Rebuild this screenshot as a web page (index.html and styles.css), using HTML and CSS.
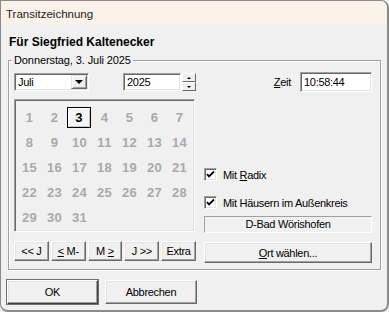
FILE: index.html
```html
<!DOCTYPE html>
<html lang="de">
<head>
  <meta charset="UTF-8" />
  <title>Transitzeichnung</title>
  <link rel="stylesheet" href="styles.css">
</head>
<body>
  <div class="window">
    <div class="titlebar">Transitzeichnung</div>
    <div class="dialog">
      <div class="person">Für Siegfried Kaltenecker</div>
      <fieldset class="group">
        <legend>Donnerstag, 3. Juli 2025</legend>
        <div class="group-body">
          <div class="left">
            <div class="date-row">
              <div class="combo">
                <span class="combo-text">Juli</span>
                <span class="drop"><span class="arrow-down"></span></span>
              </div>
              <div class="spin">
                <div class="edit year">2025</div>
                <div class="spin-btns">
                  <span class="spin-btn"><span class="tri-up"></span></span>
                  <span class="spin-btn"><span class="tri-down"></span></span>
                </div>
              </div>
            </div>
            <div class="calendar">
              <span>1</span><span>2</span><span class="today">3</span><span>4</span><span>5</span><span>6</span><span>7</span>
              <span>8</span><span>9</span><span>10</span><span>11</span><span>12</span><span>13</span><span>14</span>
              <span>15</span><span>16</span><span>17</span><span>18</span><span>19</span><span>20</span><span>21</span>
              <span>22</span><span>23</span><span>24</span><span>25</span><span>26</span><span>27</span><span>28</span>
              <span>29</span><span>30</span><span>31</span>
            </div>
            <div class="nav">
              <button class="btn">&lt;&lt; J</button>
              <button class="btn"><u>&lt;</u> M-</button>
              <button class="btn">M <u>&gt;</u></button>
              <button class="btn">J &gt;&gt;</button>
              <button class="btn">Extra</button>
            </div>
          </div>
          <div class="right">
            <div class="time-row">
              <span class="label"><u>Z</u>eit</span>
              <div class="edit time">10:58:44</div>
            </div>
            <div class="check first">
              <span class="box">
                <svg width="9" height="9" viewBox="0 0 9 9"><path d="M1 4 L3 6.5 L8 1.5" fill="none" stroke="#000" stroke-width="1.8"/></svg>
              </span>
              <span>Mit <u>R</u>adix</span>
            </div>
            <div class="check">
              <span class="box">
                <svg width="9" height="9" viewBox="0 0 9 9"><path d="M1 4 L3 6.5 L8 1.5" fill="none" stroke="#000" stroke-width="1.8"/></svg>
              </span>
              <span>Mit Häusern im Außenkreis</span>
            </div>
            <div class="place">D-Bad Wörishofen</div>
            <button class="btn wide"><u>O</u>rt wählen...</button>
          </div>
        </div>
      </fieldset>
      <div class="actions">
        <button class="btn big default">OK</button>
        <button class="btn big">Abbrechen</button>
      </div>
    </div>
  </div>
</body>
</html>
```

FILE: styles.css
```css
body {
  margin: 0;
  background: #f0f0f0;
  font-family: "Liberation Sans", Arial, sans-serif;
  font-size: 11px;
  color: #000;
}
.window {
  width: 389px;
  height: 312px;
  box-sizing: border-box;
  border: 1px solid #8a8a8a;
  border-right-width: 2px;
  border-bottom-width: 2px;
  border-radius: 0 8px 8px 8px;
  overflow: hidden;
  background: #f0f0f0;
}
.titlebar {
  height: 24px;
  line-height: 27px;
  padding-left: 5px;
  background: #faf2e9;
  font-size: 11.5px;
  color: #222;
}
.dialog {
  padding-left: 6px;
}
.person {
  margin-top: 10px;
  padding-left: 2px;
  font-size: 12px;
  font-weight: bold;
  line-height: 14px;
}
.group {
  margin: 5px 0 0 1px;
  padding: 0 0 6px 0;
  width: 373px;
  box-sizing: border-box;
  border: 1px solid #a0a0a0;
  box-shadow: inset 1px 1px #fff, 1px 1px #fff;
  letter-spacing: -0.3px;
}
.group legend {
  margin-left: 3px;
  padding: 0 2px;
  line-height: 13px;
  letter-spacing: -0.1px;
  background: #f0f0f0;
}
.group-body {
  display: grid;
  grid-template-columns: 182px 168px;
  column-gap: 8px;
  padding: 6px 0 0 5px;
}
.date-row {
  display: flex;
  justify-content: space-between;
  height: 18px;
}
.combo {
  width: 75px;
  box-sizing: border-box;
  display: flex;
  align-items: center;
  justify-content: space-between;
  background: #fff;
  border: 1px solid;
  border-color: #a0a0a0 #fff #fff #a0a0a0;
  box-shadow: inset 1px 1px #696969, inset -1px -1px #e3e3e3;
  padding: 2px 1px 2px 3px;
}
.combo-text {
  line-height: 13px;
}
.drop {
  width: 16px;
  height: 14px;
  box-sizing: border-box;
  display: flex;
  align-items: center;
  justify-content: center;
  background: #f0f0f0;
  border: 1px solid;
  border-color: #e3e3e3 #696969 #696969 #e3e3e3;
  box-shadow: inset 1px 1px #fff, inset -1px -1px #a0a0a0;
}
.arrow-down {
  width: 0;
  height: 0;
  border-left: 4px solid transparent;
  border-right: 4px solid transparent;
  border-top: 4px solid #000;
}
.spin {
  display: flex;
  gap: 1px;
}
.edit {
  box-sizing: border-box;
  background: #fff;
  border: 1px solid;
  border-color: #a0a0a0 #fff #fff #a0a0a0;
  box-shadow: inset 1px 1px #696969, inset -1px -1px #e3e3e3;
  padding: 0 3px;
  line-height: 16px;
}
.year {
  width: 58px;
  height: 18px;
}
.spin-btns {
  width: 14px;
  display: flex;
  flex-direction: column;
}
.spin-btn {
  flex: 1;
  display: flex;
  align-items: center;
  justify-content: center;
  box-sizing: border-box;
  background: #f0f0f0;
  border: 1px solid;
  border-color: #fff #696969 #696969 #fff;
}
.tri-up, .tri-down {
  width: 0;
  height: 0;
  border-left: 2px solid transparent;
  border-right: 2px solid transparent;
}
.tri-up { border-bottom: 2px solid #000; }
.tri-down { border-top: 2px solid #000; }
.calendar {
  margin-top: 8px;
  width: 181px;
  height: 133px;
  box-sizing: border-box;
  border: 1px solid;
  border-color: #a0a0a0 #fff #fff #a0a0a0;
  box-shadow: inset 1px 1px #696969, inset -1px -1px #e3e3e3;
  display: grid;
  grid-template-columns: repeat(7, 25px);
  grid-auto-rows: 25px;
  padding: 5px 0 0 2px;
  font-size: 13px;
  font-weight: bold;
  letter-spacing: 0.3px;
  color: #a8a8a8;
}
.calendar span {
  display: flex;
  align-items: center;
  justify-content: center;
}
.calendar .today {
  margin: 2px 1px 2px 0;
  border: 1px solid #000;
  box-shadow: inset 1px 1px #fff, inset -1px -1px #c8c8c8;
  background: #f4f4f4;
  color: #000;
}
.nav {
  margin-top: 9px;
  display: grid;
  grid-template-columns: repeat(5, 1fr);
  gap: 2px;
}
.btn {
  font-family: inherit;
  font-size: 11px;
  letter-spacing: -0.3px;
  color: #000;
  background: #f0f0f0;
  border: 1px solid;
  border-color: #fff #696969 #696969 #fff;
  box-shadow: inset -1px -1px #a0a0a0, inset 1px 1px #e3e3e3;
  padding: 0;
  height: 20px;
  border-radius: 0;
}
.time-row {
  display: flex;
  justify-content: flex-end;
  align-items: center;
  gap: 9px;
  margin-top: -1px;
  height: 20px;
}
.time {
  width: 72px;
  height: 20px;
  line-height: 18px;
}
.check {
  display: flex;
  align-items: center;
  gap: 6px;
  height: 13px;
  margin-top: 15px;
}
.check.first {
  margin-top: 76px;
}
.box {
  width: 13px;
  height: 13px;
  box-sizing: border-box;
  display: flex;
  align-items: center;
  justify-content: center;
  background: #fff;
  border: 1px solid;
  border-color: #a0a0a0 #fff #fff #a0a0a0;
  box-shadow: inset 1px 1px #696969, inset -1px -1px #e3e3e3;
}
.place {
  margin-top: 7px;
  height: 17px;
  box-sizing: border-box;
  border: 1px solid;
  border-color: #a0a0a0 #fff #fff #a0a0a0;
  text-align: center;
  line-height: 15px;
}
.wide {
  margin-top: 9px;
  width: 100%;
  height: 21px;
}
.actions {
  margin-top: 10px;
  display: flex;
  gap: 7px;
}
.big {
  width: 92px;
  height: 24px;
}
.default {
  width: 91px;
  border-color: #fff #404040 #404040 #fff;
  outline: 1px solid #707070;
  outline-offset: 0;
}
```
